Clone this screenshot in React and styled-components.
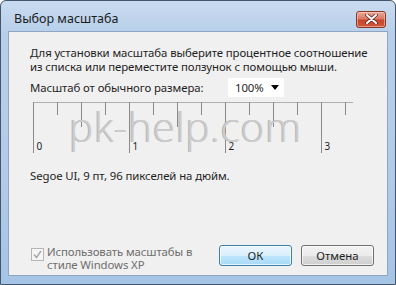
import React from 'react';
import styled, { createGlobalStyle } from 'styled-components';

const Global = createGlobalStyle`
  html, body {
    margin: 0;
    padding: 0;
    background: #fff;
  }
  body {
    font-family: 'Noto Sans', 'Open Sans', sans-serif;
    font-size: 11.4px;
    color: #1e1e1e;
  }
`;

const Window = styled.div`
  position: relative;
  width: 396px;
  height: 285px;
  box-sizing: border-box;
  border: 1px solid #45566c;
  border-radius: 6px 6px 0 0;
  background: linear-gradient(180deg, #c9dbef 0%, #b7cfea 12%, #b2cbe8 60%, #a6c4e6 100%);
  display: flex;
  flex-direction: column;
  overflow: hidden;
`;

const TitleBar = styled.div`
  height: 29px;
  display: flex;
  align-items: center;
  justify-content: space-between;
  padding: 0 9px 0 13px;
`;

const Title = styled.span`
  font-size: 12.5px;
  color: #1c1c1c;
  padding-top: 6px;
`;

const CloseButton = styled.div`
  width: 28px;
  height: 15px;
  margin-top: 7px;
  border: 1px solid #8b3524;
  border-radius: 3px;
  background: linear-gradient(180deg, #e9a99b 0%, #d87a66 45%, #c6452c 55%, #d0583d 100%);
  box-shadow: inset 0 0 0 1px rgba(255, 220, 210, 0.5);
  display: flex;
  align-items: center;
  justify-content: center;
`;

const Client = styled.div`
  flex: 1;
  margin: 1px 7px 8px 7px;
  border: 1px solid #8ea6c2;
  background: #f0f0f0;
  display: flex;
  flex-direction: column;
  padding: 14px 20px 4px 21px;
  position: relative;
  white-space: nowrap;
`;

const Intro = styled.p`
  margin: 0;
  line-height: 14px;
  letter-spacing: -0.1px;
`;

const ScaleRow = styled.div`
  display: flex;
  align-items: center;
  margin-top: 4px;
  height: 19px;
  letter-spacing: -0.1px;
`;

const ScaleLabel = styled.span`
  width: 198px;
`;

const Select = styled.div`
  width: 56px;
  height: 19px;
  background: #fff;
  display: flex;
  align-items: center;
  justify-content: space-between;
  padding: 0 5px 0 7px;
  box-sizing: border-box;
`;

const Arrow = styled.span`
  width: 0;
  height: 0;
  border-left: 4px solid transparent;
  border-right: 4px solid transparent;
  border-top: 5px solid #000;
`;

const RulerBox = styled.div`
  position: relative;
  margin-top: 5px;
  margin-left: 3px;
  height: 52px;
`;

const Watermark = styled.span`
  position: absolute;
  left: 36px;
  top: -4px;
  font-family: 'Open Sans', sans-serif;
  font-weight: 300;
  font-size: 41px;
  letter-spacing: 0.5px;
  color: #cccccc;
  text-shadow: -1px 0 0 #b6b6b6;
  pointer-events: none;
`;

const FontInfo = styled.div`
  margin-top: 14px;
  letter-spacing: -0.1px;
`;

const Footer = styled.div`
  margin-top: auto;
  display: flex;
  align-items: flex-start;
  justify-content: space-between;
`;

const CheckLabel = styled.label`
  display: flex;
  align-items: flex-start;
  gap: 3px;
  color: #6d6d6d;
  line-height: 13px;
  margin-left: 1px;
  letter-spacing: -0.1px;
`;

const CheckBox = styled.span`
  width: 11px;
  height: 11px;
  margin-top: 3px;
  border: 1px solid #b5b5b5;
  background: #f5f5f5;
  display: flex;
  align-items: center;
  justify-content: center;
`;

const Buttons = styled.div`
  display: flex;
  gap: 9px;
  margin-right: -7px;
`;

const Button = styled.div`
  width: 73px;
  height: 21px;
  box-sizing: border-box;
  border-radius: 3px;
  border: 1px solid ${p => (p.$primary ? '#3c7fb1' : '#707070')};
  background: ${p =>
    p.$primary
      ? 'linear-gradient(180deg, #eaf6fd 0%, #d9effc 50%, #bee6fd 51%, #a7d9f5 100%)'
      : 'linear-gradient(180deg, #f2f2f2 0%, #ebebeb 50%, #dddddd 51%, #cfcfcf 100%)'};
  box-shadow: inset 0 0 0 1px rgba(255, 255, 255, 0.7);
  display: flex;
  align-items: center;
  justify-content: center;
  color: #1e1e1e;
`;

const Ruler = () => {
  const ticks = [];
  for (let i = 1; i <= 13; i++) {
    const x = 0.5 + i * 24;
    if (i % 4 === 0) continue;
    const len = i % 4 === 2 ? 25 : 13;
    ticks.push(<line key={i} x1={x} y1="0" x2={x} y2={len} stroke="#8a8a8a" />);
  }
  const majors = [0, 1, 2, 3].map(n => {
    const x = 0.5 + n * 96;
    return (
      <g key={n}>
        <line x1={x} y1="0" x2={x} y2="51" stroke="#8a8a8a" />
        <text x={x + 3} y="48" fontSize="10" fill="#1e1e1e" fontFamily="Noto Sans, sans-serif">
          {n}
        </text>
      </g>
    );
  });
  return (
    <svg width="322" height="52" viewBox="0 0 322 52">
      <line x1="0" y1="0.5" x2="320" y2="0.5" stroke="#b0b0b0" />
      {ticks}
      {majors}
    </svg>
  );
};

export default function App() {
  return (
    <>
      <Global />
      <Window>
        <TitleBar>
          <Title>Выбор масштаба</Title>
          <CloseButton>
            <svg width="13" height="10" viewBox="0 0 13 10">
              <path d="M2 1 L11 9 M11 1 L2 9" stroke="#6a2a1f" strokeWidth="3.6" strokeLinecap="round" />
              <path d="M2 1 L11 9 M11 1 L2 9" stroke="#ffffff" strokeWidth="2" strokeLinecap="round" />
            </svg>
          </CloseButton>
        </TitleBar>
        <Client>
          <Intro>
            Для установки масштаба выберите процентное соотношение
            <br />
            из списка или переместите ползунок с помощью мыши.
          </Intro>
          <ScaleRow>
            <ScaleLabel>Масштаб от обычного размера:</ScaleLabel>
            <Select>
              <span>100%</span>
              <Arrow />
            </Select>
          </ScaleRow>
          <RulerBox>
            <Ruler />
            <Watermark>pk-help.com</Watermark>
          </RulerBox>
          <FontInfo>Segoe UI, 9 пт, 96 пикселей на дюйм.</FontInfo>
          <Footer>
            <CheckLabel>
              <CheckBox>
                <svg width="9" height="9" viewBox="0 0 9 9">
                  <path d="M1 4.5 L3.5 7.5 L8 1" fill="none" stroke="#a8a8a8" strokeWidth="1.4" />
                </svg>
              </CheckBox>
              <span>
                Использовать масштабы в
                <br />
                стиле Windows XP
              </span>
            </CheckLabel>
            <Buttons>
              <Button $primary>ОК</Button>
              <Button>Отмена</Button>
            </Buttons>
          </Footer>
        </Client>
      </Window>
    </>
  );
}
